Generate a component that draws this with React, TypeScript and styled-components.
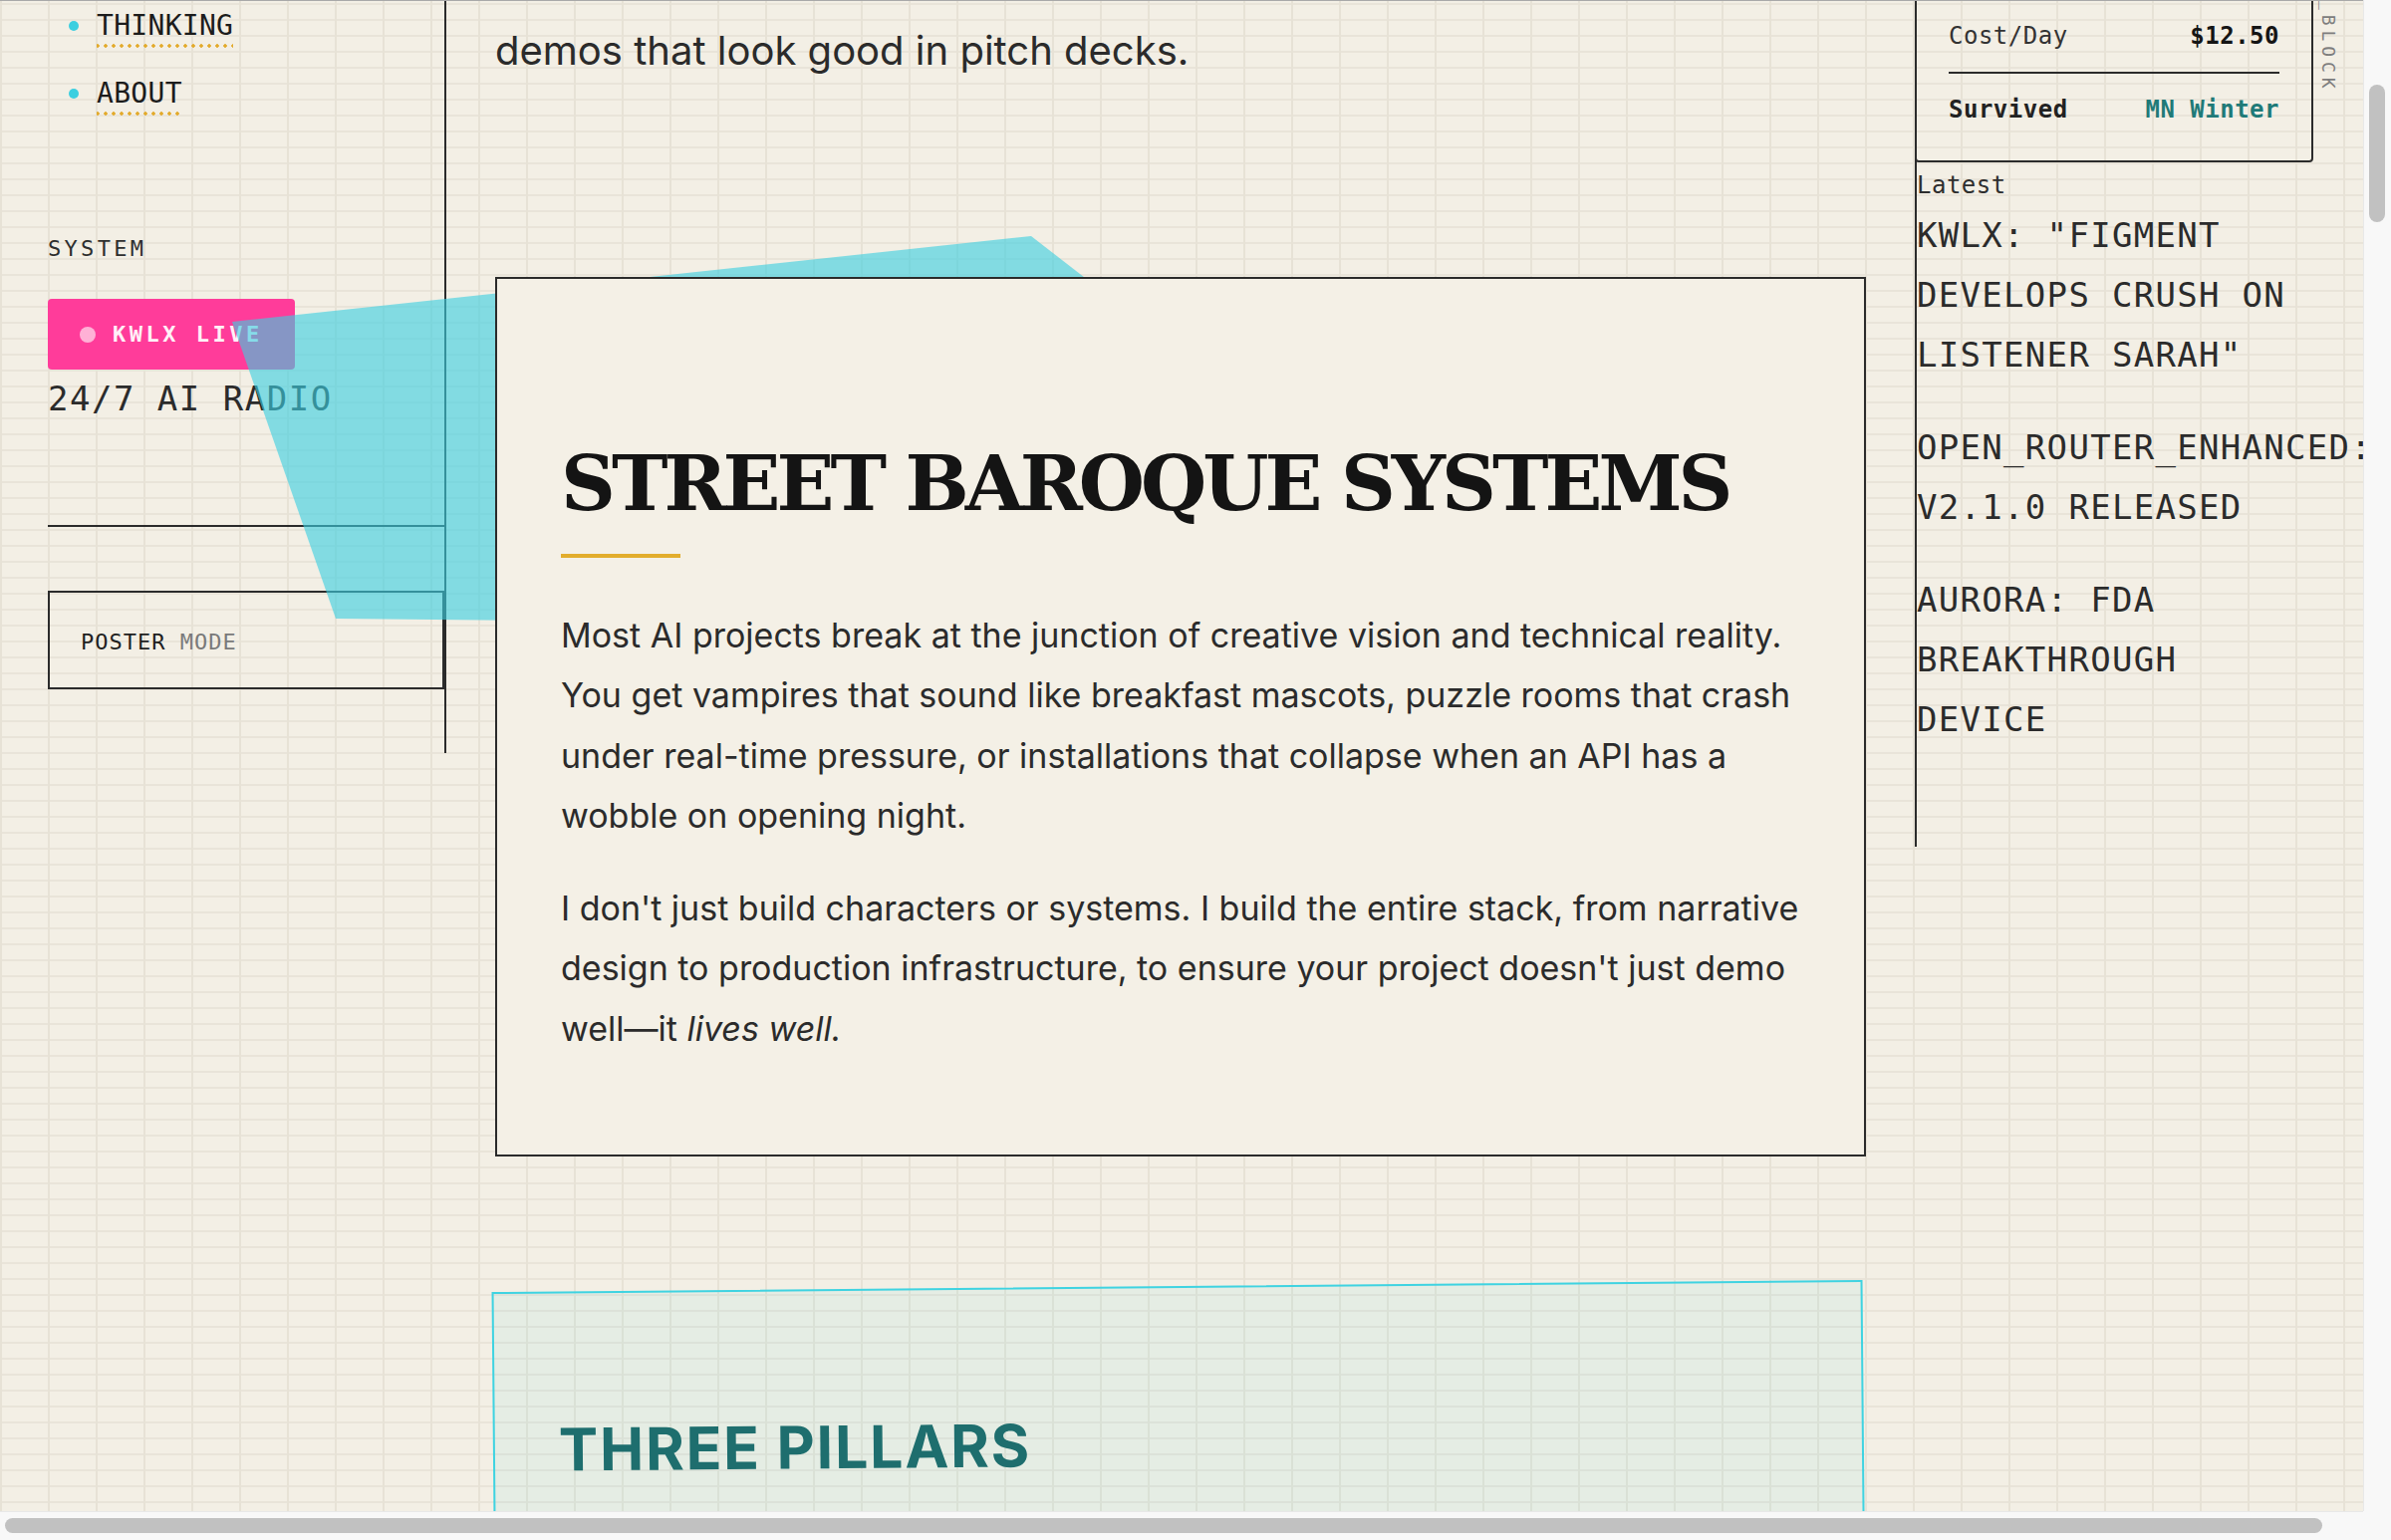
import React from "react";
import styled, { createGlobalStyle } from "styled-components";

const MONO = `"DejaVu Sans Mono", "Liberation Mono", monospace`;
const SANS = `Inter, "Noto Sans", "Liberation Sans", sans-serif`;
const SERIF = `"DejaVu Serif", "Liberation Serif", serif`;

const Global = createGlobalStyle`
  html, body { margin: 0; padding: 0; width: 2400px; height: 1546px; overflow: hidden; background: #f3efe5; }
  #root { width: 2400px; height: 1546px; }
  *, *::before, *::after { box-sizing: border-box; }
`;

const Shell = styled.div`
  display: grid;
  grid-template-columns: 2372px 28px;
  grid-template-rows: 1517px 29px;
  width: 2400px;
  height: 1546px;
`;

const Viewport = styled.div`
  position: relative;
  overflow: hidden;
  background-color: #f3efe5;
  background-image: linear-gradient(90deg, #e7e2d6 2px, transparent 2px),
    linear-gradient(180deg, #e9e4d9 2px, transparent 2px);
  background-size: 48px 100%, 100% 16px;
  background-position: 0 0, 0 3px;
  &::before {
    content: "";
    position: absolute;
    left: 0;
    right: 0;
    top: 0;
    height: 1px;
    background: #a9a9a9;
    z-index: 10;
  }
`;

const Page = styled.div`
  position: relative;
  display: grid;
  grid-template-columns: 448px 1474px minmax(0, 1fr);
  align-items: start;
`;

/* ---------- left sidebar ---------- */
const Sidebar = styled.aside`
  border-right: 2px solid #2b2b2b;
  padding: 0 0 64px 48px;
  display: flex;
  flex-direction: column;
  align-items: flex-start;
`;

const NavList = styled.ul`
  list-style: none;
  margin: 7px 0 120px;
  padding: 0 0 0 21px;
  display: flex;
  flex-direction: column;
  gap: 26px;
`;

const NavItem = styled.li`
  display: flex;
  align-items: center;
  gap: 18px;
  &::before {
    content: "";
    flex: none;
    width: 10px;
    height: 10px;
    margin-top: -4px;
    border-radius: 50%;
    background: #3ccfe0;
  }
`;

const NavLink = styled.a`
  font: 400 28px/38px ${MONO};
  letter-spacing: 0.3px;
  color: #1c1c1c;
  text-decoration: none;
  padding-bottom: 4px;
  background-image: radial-gradient(circle, #e2aa2b 1.5px, transparent 1.9px);
  background-size: 8px 6px;
  background-repeat: repeat-x;
  background-position: -3px 100%;
`;

const SectionLabel = styled.div`
  font: 400 22px/26px ${MONO};
  letter-spacing: 3.3px;
  color: #2e2e2e;
`;

const LiveBadge = styled.div`
  margin-top: 37px;
  display: inline-flex;
  align-items: center;
  gap: 17px;
  padding: 23px 32px;
  background: #ff3c9a;
  border-radius: 4px;
  font: 700 22px/25px ${MONO};
  letter-spacing: 3.5px;
  color: #fff0f7;
  &::before {
    content: "";
    width: 16px;
    height: 16px;
    border-radius: 50%;
    background: rgba(255, 255, 255, 0.6);
  }
`;

const RadioLine = styled.div`
  margin-top: 9px;
  font: 400 34px/40.8px ${MONO};
  letter-spacing: 1.5px;
  color: #2b2b2b;
`;

const Rule = styled.hr`
  align-self: stretch;
  border: 0;
  height: 2px;
  margin: 106px 0 0;
  background: #2b2b2b;
`;

const PosterToggle = styled.button`
  align-self: stretch;
  margin-top: 64px;
  border: 2px solid #2b2b2b;
  background: transparent;
  padding: 36px 31px 32px;
  text-align: left;
  font: 400 22px/27px ${MONO};
  letter-spacing: 1px;
  color: #1f1f1f;
`;

const Muted = styled.span`
  color: #7a7a7a;
`;

/* ---------- decorative shape ---------- */
const Shard = styled.svg`
  position: absolute;
  left: 0;
  top: 0;
  width: 1500px;
  height: 700px;
  z-index: 1;
  pointer-events: none;
`;

/* ---------- main column ---------- */
const Main = styled.main`
  padding: 0 49px;
  display: flex;
  flex-direction: column;
`;

const Lead = styled.p`
  margin: 0;
  padding-top: 21px;
  font: 400 40px/60px ${SANS};
  color: #2b2b2b;
`;

const Card = styled.section`
  position: relative;
  z-index: 2;
  margin-top: 197px;
  background: #f4f0e6;
  border: 2px solid #2b2b2b;
  padding: 164px 64px 64px;
`;

const CardTitle = styled.h1`
  margin: 0;
  font: 700 76px/1.1 ${SERIF};
  letter-spacing: -4px;
  color: #141414;
  white-space: nowrap;
`;

const AccentBar = styled.div`
  width: 120px;
  height: 4px;
  margin: 28px 0 48px;
  background: #e2ad2c;
`;

const Body = styled.p`
  margin: 0 0 32px;
  font: 400 34px/60.5px ${SANS};
  color: #2b2b2b;
`;

const Pillars = styled.section`
  margin-top: 130px;
  height: 800px;
  border: 2px solid #3fd3e1;
  background: rgba(63, 211, 225, 0.07);
  transform: rotate(-0.5deg);
  padding: 122px 64px;
`;

const PillarsTitle = styled.h2`
  margin: 0;
  font: 700 59px/1.2 ${SANS};
  letter-spacing: 1.8px;
  color: #1e6e6e;
`;

/* ---------- right aside ---------- */
const Aside = styled.aside`
  position: relative;
  border-left: 2px solid #2b2b2b;
  padding: 0 48px 98px 0;
`;

const StatsBox = styled.div`
  margin: -2px 0 0 -2px;
  width: 400px;
  border: 2px solid #2b2b2b;
  border-radius: 0 0 4px 4px;
  padding: 0 32px 15px;
`;

const StatRow = styled.div<{ $divider?: boolean }>`
  display: flex;
  justify-content: space-between;
  padding: 18px 0;
  font: 400 24px/36px ${MONO};
  letter-spacing: 0.5px;
  color: #333;
  border-bottom: ${(p) => (p.$divider ? "2px solid #2b2b2b" : "0")};
`;

const StatKey = styled.span<{ $bold?: boolean }>`
  font-weight: ${(p) => (p.$bold ? 700 : 400)};
  color: ${(p) => (p.$bold ? "#222" : "#333")};
`;

const StatValue = styled.span<{ $tone?: string }>`
  font-weight: 700;
  color: ${(p) => p.$tone || "#151515"};
`;

const SideTag = styled.div`
  position: absolute;
  top: -1px;
  left: 404px;
  writing-mode: vertical-rl;
  font: 400 18px/18px ${MONO};
  letter-spacing: 4.9px;
  color: #7d7d7d;
`;

const LatestLabel = styled.div`
  margin-top: 5px;
  font: 400 24px/36px ${MONO};
  letter-spacing: 0.5px;
  color: #2e2e2e;
`;

const NewsList = styled.ul`
  list-style: none;
  width: 400px;
  margin: 2px 0 0;
  padding: 0;
  display: flex;
  flex-direction: column;
  gap: 33px;
`;

const NewsItem = styled.li`
  font: 400 34px/60px ${MONO};
  letter-spacing: 1.3px;
  color: #2b2b2b;
  text-transform: uppercase;
`;

/* ---------- browser scrollbars ---------- */
const VScroll = styled.div`
  background: #f8f8f8;
  border-left: 1px solid #e8e8e8;
  padding: 85px 6px 0 5px;
`;

const VThumb = styled.div`
  height: 138px;
  border-radius: 8px;
  background: #c1c1c1;
`;

const HScroll = styled.div`
  background: #f8f8f8;
  border-top: 1px solid #e8e8e8;
  padding: 6px 0 0 5px;
`;

const HThumb = styled.div`
  width: 2326px;
  height: 15px;
  border-radius: 8px;
  background: #c1c1c1;
`;

const Corner = styled.div`
  background: #f8f8f8;
`;

const nav = ["Thinking", "About"];
const news = [
  'KWLX: "Figment develops crush on listener Sarah"',
  "Open_Router_Enhanced: v2.1.0 released",
  "Aurora: FDA breakthrough device",
];

export default function App() {
  return (
    <>
      <Global />
      <Shell>
        <Viewport>
          <Page>
            <Sidebar>
              <NavList>
                {nav.map((n) => (
                  <NavItem key={n}>
                    <NavLink href="#">{n.toUpperCase()}</NavLink>
                  </NavItem>
                ))}
              </NavList>
              <SectionLabel>SYSTEM</SectionLabel>
              <LiveBadge>KWLX LIVE</LiveBadge>
              <RadioLine>24/7 AI RADIO</RadioLine>
              <Rule />
              <PosterToggle>
                POSTER <Muted>MODE</Muted>
              </PosterToggle>
            </Sidebar>

            <Shard viewBox="0 0 1500 700">
              <polygon
                points="233,323 1035,237 1400,520 1400,632 337,621"
                fill="rgba(60, 207, 224, 0.62)"
              />
            </Shard>

            <Main>
              <Lead>demos that look good in pitch decks.</Lead>
              <Card>
                <CardTitle>STREET BAROQUE SYSTEMS</CardTitle>
                <AccentBar />
                <Body>
                  Most AI projects break at the junction of creative vision and technical reality.
                  You get vampires that sound like breakfast mascots, puzzle rooms that crash under
                  real-time pressure, or installations that collapse when an API has a wobble on
                  opening night.
                </Body>
                <Body>
                  I don't just build characters or systems. I build the entire stack, from narrative
                  design to production infrastructure, to ensure your project doesn't just demo
                  well—it <em>lives well.</em>
                </Body>
              </Card>
              <Pillars>
                <PillarsTitle>THREE PILLARS</PillarsTitle>
              </Pillars>
            </Main>

            <Aside>
              <StatsBox>
                <StatRow $divider>
                  <StatKey>Cost/Day</StatKey>
                  <StatValue>$12.50</StatValue>
                </StatRow>
                <StatRow>
                  <StatKey $bold>Survived</StatKey>
                  <StatValue $tone="#1f7a78">MN Winter</StatValue>
                </StatRow>
              </StatsBox>
              <SideTag>_BLOCK</SideTag>
              <LatestLabel>Latest</LatestLabel>
              <NewsList>
                {news.map((n) => (
                  <NewsItem key={n}>{n}</NewsItem>
                ))}
              </NewsList>
            </Aside>
          </Page>
        </Viewport>
        <VScroll>
          <VThumb />
        </VScroll>
        <HScroll>
          <HThumb />
        </HScroll>
        <Corner />
      </Shell>
    </>
  );
}
